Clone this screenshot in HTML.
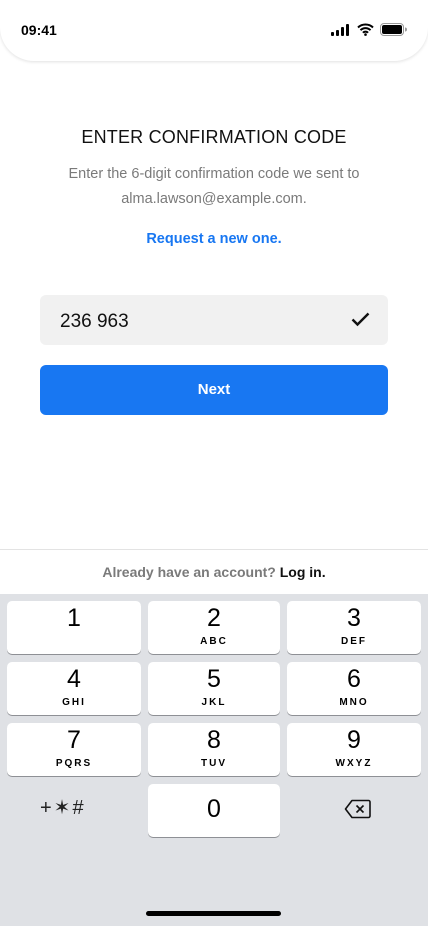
<!DOCTYPE html>
<html><head><meta charset="utf-8"><style>
*{margin:0;padding:0;box-sizing:border-box}
body{width:428px;height:926px;position:relative;background:#fff;font-family:"Liberation Sans",sans-serif;overflow:hidden}
.sb{position:absolute;left:0;top:0;width:428px;height:61px;background:#fff;border-radius:0 0 34px 34px;box-shadow:0 1px 3px rgba(0,0,0,.12)}
.time{position:absolute;left:21px;top:22px;font-size:14px;font-weight:bold;color:#000}
h1{position:absolute;top:127px;width:100%;text-align:center;font-size:18px;font-weight:normal;color:#111;letter-spacing:.2px}
.sub{position:absolute;top:162px;width:100%;text-align:center;font-size:14.5px;line-height:25px;color:#7a7a7a}
.req{position:absolute;top:231px;width:100%;text-align:center;font-size:14.5px;font-weight:bold;color:#1877f2}
.inp{position:absolute;left:40px;top:295px;width:348px;height:50px;background:#f1f1f1;border-radius:6px;font-size:19px;color:#111;padding:16px 20px}
.btn{position:absolute;left:40px;top:365px;width:348px;height:50px;background:#1877f2;border-radius:6px;color:#fff;font-weight:bold;font-size:15px;text-align:center;line-height:50px}
.line{position:absolute;top:549px;left:0;width:428px;height:1px;background:#e3e3e3}
.have{position:absolute;top:564px;width:100%;text-align:center;font-size:14px;color:#7a7a7a;font-weight:bold}
.have b{color:#111}
.kb{position:absolute;top:594px;left:0;width:428px;height:332px;background:#dfe1e5}
.k{position:absolute;height:53px;background:#fff;border-radius:5px;box-shadow:0 1px 0 #8e9095;text-align:center}
.k .n{font-size:25px;line-height:28px;padding-top:3px;color:#000}
.k .l{font-size:10px;font-weight:bold;letter-spacing:2px;color:#000;margin-top:4px}
.home{position:absolute;left:146px;top:911px;width:135px;height:5px;border-radius:3px;background:#000}
</style></head><body>
<div class="sb"><div class="time">09:41</div>
<svg style="position:absolute;left:331px;top:24px" width="20" height="12"><rect x="0" y="8" width="3" height="4" rx="1"/><rect x="5" y="6" width="3" height="6" rx="1"/><rect x="10" y="3" width="3" height="9" rx="1"/><rect x="15" y="0" width="3" height="12" rx="1"/></svg>
<svg style="position:absolute;left:357px;top:23px" width="17" height="13"><path d="M1 4.5a11 11 0 0 1 15 0M3.5 7.2a7 7 0 0 1 10 0M6 9.8a3.2 3.2 0 0 1 5 0" stroke="#000" stroke-width="2" fill="none"/><circle cx="8.5" cy="11.6" r="1.3"/></svg>
<svg style="position:absolute;left:380px;top:23px" width="27" height="13"><rect x=".5" y=".5" width="23" height="12" rx="3.5" fill="none" stroke="#999"/><rect x="2" y="2" width="20" height="9" rx="2"/><path d="M25 4.5v4a2 2 0 0 0 0-4z" fill="#999"/></svg>
</div>
<h1>ENTER CONFIRMATION CODE</h1>
<div class="sub">Enter the 6-digit confirmation code we sent to<br>alma.lawson@example.com.</div>
<div class="req">Request a new one.</div>
<div class="inp">236 963
<svg style="position:absolute;right:18px;top:17px" width="19" height="15"><path d="M1.5 7.5l5 5L17.5 1.5" stroke="#111" stroke-width="2.4" fill="none"/></svg></div>
<div class="btn">Next</div>
<div class="line"></div>
<div class="have">Already have an account? <b>Log in.</b></div>
<div class="kb"></div>
<div class="k" style="left:7px;top:601px;width:134px"><div class="n">1</div></div>
<div class="k" style="left:148px;top:601px;width:132px"><div class="n">2</div><div class="l">ABC</div></div>
<div class="k" style="left:287px;top:601px;width:134px"><div class="n">3</div><div class="l">DEF</div></div>
<div class="k" style="left:7px;top:662px;width:134px"><div class="n">4</div><div class="l">GHI</div></div>
<div class="k" style="left:148px;top:662px;width:132px"><div class="n">5</div><div class="l">JKL</div></div>
<div class="k" style="left:287px;top:662px;width:134px"><div class="n">6</div><div class="l">MNO</div></div>
<div class="k" style="left:7px;top:723px;width:134px"><div class="n">7</div><div class="l">PQRS</div></div>
<div class="k" style="left:148px;top:723px;width:132px"><div class="n">8</div><div class="l">TUV</div></div>
<div class="k" style="left:287px;top:723px;width:134px"><div class="n">9</div><div class="l">WXYZ</div></div>
<div class="k" style="left:148px;top:784px;width:132px"><div class="n" style="padding-top:11px">0</div></div>
<div style="position:absolute;left:40px;top:795px;font-size:20px;color:#222;letter-spacing:2px;font-weight:300">+✶#</div>
<svg style="position:absolute;left:344px;top:799px" width="27" height="20"><path d="M8 1.5h16.5a1.5 1.5 0 0 1 1.5 1.5v14a1.5 1.5 0 0 1-1.5 1.5H8L1.5 10z" fill="none" stroke="#111" stroke-width="1.6" stroke-linejoin="round"/><path d="M12.5 6.5l7 7M19.5 6.5l-7 7" stroke="#111" stroke-width="1.6"/></svg>
<div class="home"></div>
</body></html>
